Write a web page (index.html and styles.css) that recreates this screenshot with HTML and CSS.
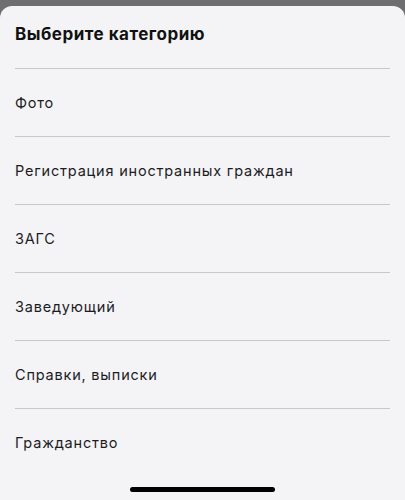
FILE: index.html
```html
<!DOCTYPE html>
<html lang="ru">
<head>
  <meta charset="UTF-8">
  <meta name="viewport" content="width=device-width, initial-scale=1.0">
  <title>Выберите категорию</title>
  <link rel="stylesheet" href="styles.css">
</head>
<body>
  <div class="sheet">
    <header class="sheet-header">
      <h1>Выберите категорию</h1>
    </header>
    <ul class="category-list">
      <li class="category">Фото</li>
      <li class="category">Регистрация иностранных граждан</li>
      <li class="category">ЗАГС</li>
      <li class="category">Заведующий</li>
      <li class="category">Справки, выписки</li>
      <li class="category">Гражданство</li>
    </ul>
    <div class="home-indicator"></div>
  </div>
</body>
</html>
```

FILE: styles.css
```css
* {
  box-sizing: border-box;
  margin: 0;
  padding: 0;
}
html, body {
  height: 100%;
}
body {
  font-family: Inter, 'Noto Sans', sans-serif;
  background: #6e6e70;
  color: #111;
  padding-top: 6px;
  overflow: hidden;
}
.sheet {
  position: relative;
  height: 494px;
  background: #f4f4f7;
  border-radius: 12px 12px 0 0;
  padding: 0 15px;
}
.sheet-header {
  height: 62px;
  display: flex;
  align-items: center;
  padding-bottom: 7px;
}
h1 {
  font-size: 17px;
  font-weight: 700;
  letter-spacing: 0.5px;
}
.category-list {
  list-style: none;
}
.category {
  height: 68px;
  display: flex;
  align-items: center;
  border-top: 1.5px solid #c8c8cc;
  font-size: 14.5px;
  letter-spacing: 0.8px;
  color: #1c1c1e;
}
.home-indicator {
  position: absolute;
  left: 130px;
  bottom: 8px;
  width: 145px;
  height: 5px;
  border-radius: 3px;
  background: #000;
}
```
